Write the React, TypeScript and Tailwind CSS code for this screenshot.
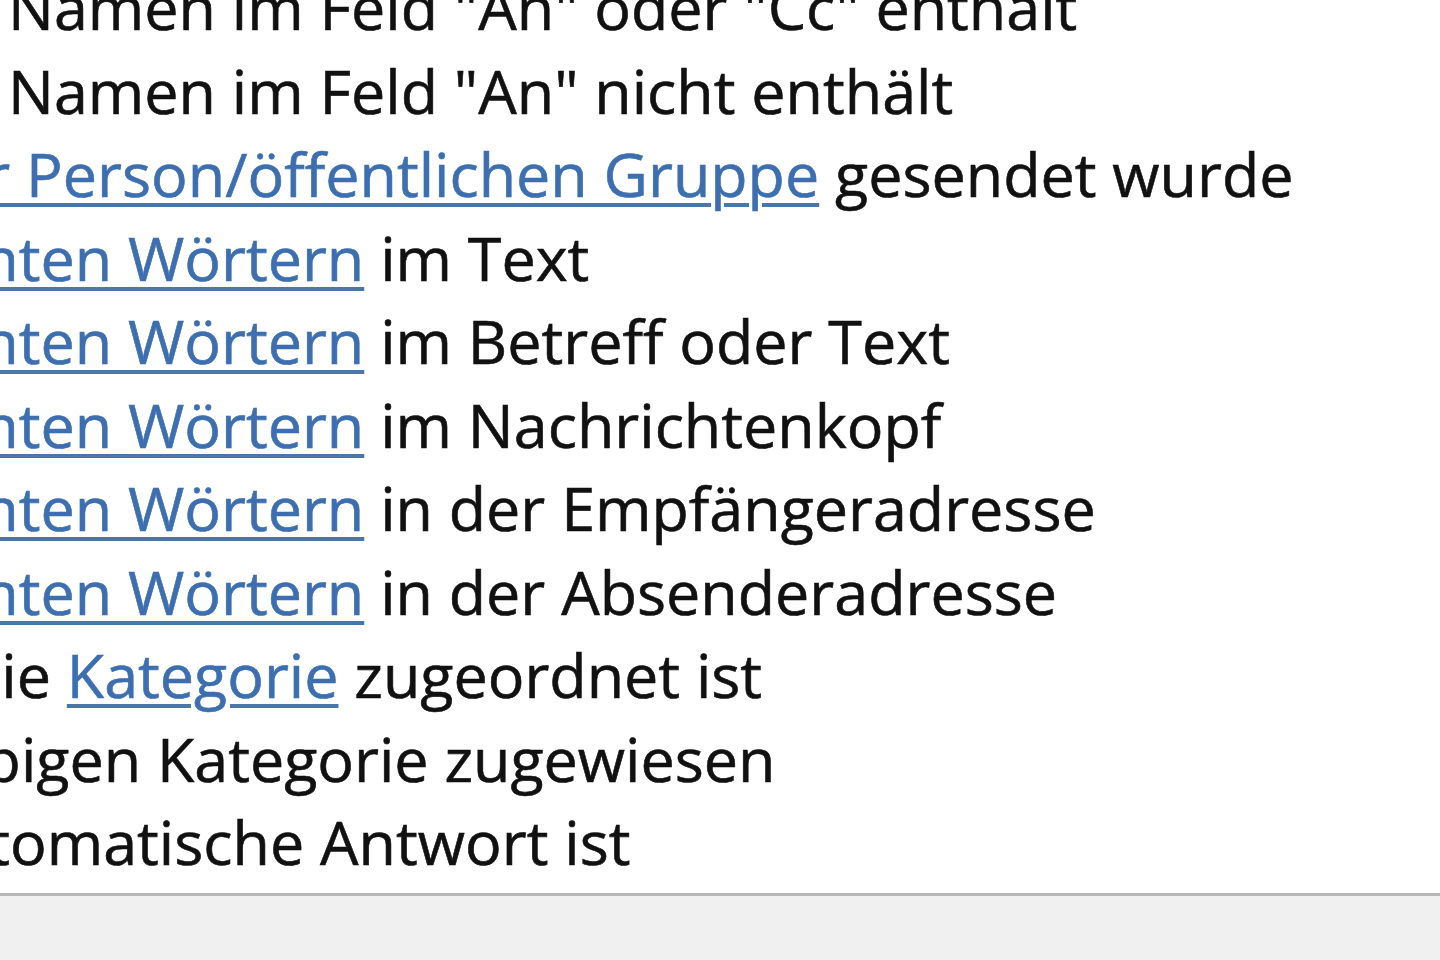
import React from 'react';

type Part = { text: string; link?: boolean };

interface RuleLine {
  offset: number;
  parts: Part[];
}

// Zoomed view of the rule conditions list; offsets clip the start of each line
const lines: RuleLine[] = [
  { offset: -223, parts: [{ text: 'meinen ' }, { text: 'Namen im Feld "An" oder "Cc" enthält' }] },
  { offset: -223, parts: [{ text: 'meinen ' }, { text: 'Namen im Feld "An" nicht enthält' }] },
  { offset: -136, parts: [{ text: 'einer Person/öffentlichen Gruppe', link: true }, { text: ' gesendet wurde' }] },
  { offset: -232, parts: [{ text: 'bestimmten Wörtern', link: true }, { text: ' im Text' }] },
  { offset: -232, parts: [{ text: 'bestimmten Wörtern', link: true }, { text: ' im Betreff oder Text' }] },
  { offset: -232, parts: [{ text: 'bestimmten Wörtern', link: true }, { text: ' im Nachrichtenkopf' }] },
  { offset: -232, parts: [{ text: 'bestimmten Wörtern', link: true }, { text: ' in der Empfängeradresse' }] },
  { offset: -232, parts: [{ text: 'bestimmten Wörtern', link: true }, { text: ' in der Absenderadresse' }] },
  { offset: -36, parts: [{ text: 'die ' }, { text: 'Kategorie', link: true }, { text: ' zugeordnet ist' }] },
  { offset: -153, parts: [{ text: 'beliebigen Kategorie zugewiesen' }] },
  { offset: -83, parts: [{ text: 'automatische Antwort ist' }] },
];

export default function App() {
  return (
    <div
      className="w-[1440px] h-[960px] overflow-hidden bg-[#f0f0f0] flex flex-col"
      style={{ fontFamily: '"Open Sans", "Noto Sans", sans-serif' }}
    >
      <div className="h-[893px] bg-white overflow-hidden">
        <div className="-mt-[35px]">
          {lines.map((line, i) => (
            <div
              key={i}
              className="h-[83.5px] leading-[83.5px] text-[61px] text-[#111] whitespace-nowrap [-webkit-text-stroke:0.6px_currentColor]"
            >
              <span className="inline-block" style={{ marginLeft: line.offset }}>
                {line.parts.map((p, j) =>
                  p.link ? (
                    <span
                      key={j}
                      className="text-[#3d6fb0] underline decoration-[#4a76a8] decoration-[4px] underline-offset-[6px]"
                    >
                      {p.text}
                    </span>
                  ) : (
                    <span key={j}>{p.text}</span>
                  )
                )}
              </span>
            </div>
          ))}
        </div>
      </div>
      <div className="h-[3px] bg-[#b6b6ba]" />
      <div className="flex-1" />
    </div>
  );
}
